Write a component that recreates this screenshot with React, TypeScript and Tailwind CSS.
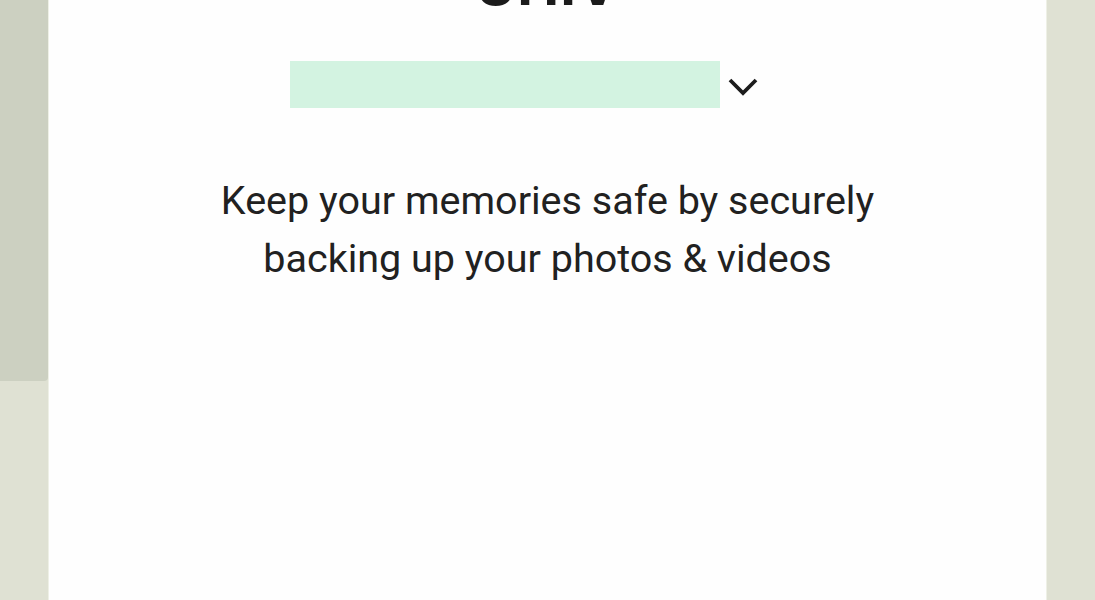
import React from "react";

export default function App() {
  return (
    <div className="w-[1095px] h-[600px] overflow-hidden flex bg-[#dfe1d3]" style={{ fontFamily: "Roboto, 'Noto Sans', sans-serif" }}>
      <div className="w-[48px] h-full flex flex-col">
        <div className="h-[381px] bg-[#ccd0c1] rounded-br-[4px]" />
        <div className="flex-1 bg-[#dfe1d3]" />
      </div>
      <div className="w-[999px] h-full bg-[#fefefe] border-l border-r border-[#eef0e6] flex flex-col items-center">
        <div className="h-[12px] overflow-hidden flex items-end">
          <div className="text-[56px] leading-none font-bold text-[#1b1b1b] tracking-[1px] -mb-[1px]" style={{ fontFamily: "Inter, 'Noto Sans', sans-serif" }}>UHIV</div>
        </div>
        <div className="mt-[49px] flex items-center w-full justify-center">
          <div className="w-[430px] h-[47px] bg-[#d3f3e1]" />
          <div className="ml-[8px] mt-[4px] w-[30px] flex items-center justify-center">
            <svg width="30" height="20" viewBox="0 0 30 20" fill="none">
              <path d="M2 3 L15 16 L28 3" stroke="#1c1c1c" strokeWidth="3.8" strokeLinecap="butt" />
            </svg>
          </div>
          <div className="w-[48px]" />
        </div>
        <div className="mt-[64px] text-center text-[39.5px] leading-[58px] text-[#212121] font-normal">
          <div>Keep your memories safe by securely</div>
          <div>backing up your photos &amp; videos</div>
        </div>
      </div>
      <div className="flex-1 h-full bg-[#dfe1d3]" />
    </div>
  );
}
